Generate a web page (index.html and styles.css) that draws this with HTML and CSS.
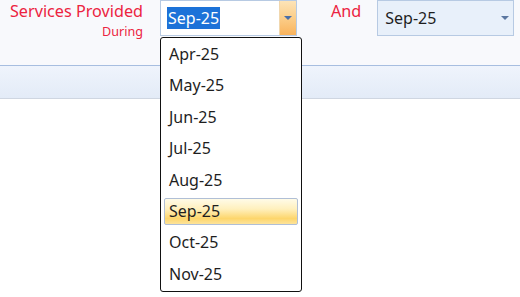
FILE: index.html
```html
<!DOCTYPE html>
<html lang="en">
  <head>
    <meta charset="UTF-8" />
    <title>Services Provided</title>
    <link rel="stylesheet" href="styles.css">
  </head>
  <body>
    <section class="filter">
      <div class="label">
        <span class="label-main">Services Provided</span>
        <span class="label-sub">During</span>
      </div>
      <div class="combo combo-open">
        <div class="field"><span class="selected">Sep-25</span></div>
        <a class="drop-btn" href="javascript:;"><i class="arrow"></i></a>
        <ul class="list">
          <li>Apr-25</li>
          <li>May-25</li>
          <li>Jun-25</li>
          <li>Jul-25</li>
          <li>Aug-25</li>
          <li class="current">Sep-25</li>
          <li>Oct-25</li>
          <li>Nov-25</li>
        </ul>
      </div>
      <div class="label-and">And</div>
      <div class="combo combo-closed">
        <div class="field">Sep-25</div>
        <a class="drop-btn" href="javascript:;"><i class="arrow"></i></a>
      </div>
    </section>
    <div class="band"></div>
    <main class="content"></main>
  </body>
</html>
```

FILE: styles.css
```css
* {
  margin: 0;
  padding: 0;
  box-sizing: border-box;
}
html,
body {
  height: 100%;
}
body {
  display: flex;
  flex-direction: column;
  background: #fff;
  font-family: "Noto Sans", "Open Sans", sans-serif;
  color: #1e1e1e;
}
li {
  list-style-type: none;
}
a {
  text-decoration: none;
}
.filter {
  position: relative;
  z-index: 2;
  display: flex;
  align-items: flex-start;
  height: 65px;
  flex-shrink: 0;
  background: #f8f9fc;
}
.label {
  width: 143px;
  display: flex;
  flex-direction: column;
  align-items: flex-end;
  color: #ec2340;
}
.label-main {
  font-size: 16.2px;
  line-height: 22px;
}
.label-sub {
  font-size: 12.6px;
  line-height: 16px;
  margin-top: 2px;
}
.label-and {
  color: #ec2340;
  font-size: 16.2px;
  line-height: 22px;
  margin-left: 34px;
}
.combo {
  position: relative;
  display: flex;
  width: 137px;
  height: 36px;
  border: 1px solid #b7cae3;
}
.combo-open {
  margin-left: 17px;
  background: #fff;
}
.combo-closed {
  margin-left: 16px;
  background: #e8f0fa;
}
.field {
  flex: 1;
  display: flex;
  align-items: center;
  padding-left: 6px;
  font-size: 16px;
}
.combo-closed .field {
  padding-left: 7px;
}
.selected {
  background: #1c72d8;
  color: #fff;
  line-height: 22px;
  padding: 0 1px;
}
.drop-btn {
  width: 17px;
  display: flex;
  align-items: center;
  justify-content: center;
}
.combo-open .drop-btn {
  background: linear-gradient(#fde4b8, #fbd08e 45%, #f9b35c);
  border-left: 1px solid #f1d7ae;
}
.arrow {
  width: 0;
  height: 0;
  border-left: 4px solid transparent;
  border-right: 4px solid transparent;
  border-top: 4px solid #4a6fa8;
  margin-top: -1px;
}
.combo-closed .arrow {
  border-top-color: #5b77a0;
}
.list {
  position: absolute;
  left: -1px;
  top: 36px;
  width: 142px;
  height: 255px;
  padding: 3px 3px 0;
  background: #fff;
  border: 1px solid #111;
  border-radius: 3px;
  z-index: 5;
}
.list li {
  height: 27px;
  line-height: 25px;
  margin-bottom: 4.4px;
  padding-left: 4px;
  font-size: 16px;
  border: 1px solid transparent;
  border-radius: 2px;
}
.list li.current {
  border-color: #b0bfd6;
  background: linear-gradient(#fffbe8, #fff0bd 40%, #fdd66c 78%, #fde39a);
}
.band {
  height: 34px;
  flex-shrink: 0;
  border-top: 1px solid #a7bee0;
  border-bottom: 1px solid #cfd6e1;
  background: linear-gradient(#eff4fc, #e3ebf7);
}
.content {
  flex: 1;
  background: #fff;
}
```
